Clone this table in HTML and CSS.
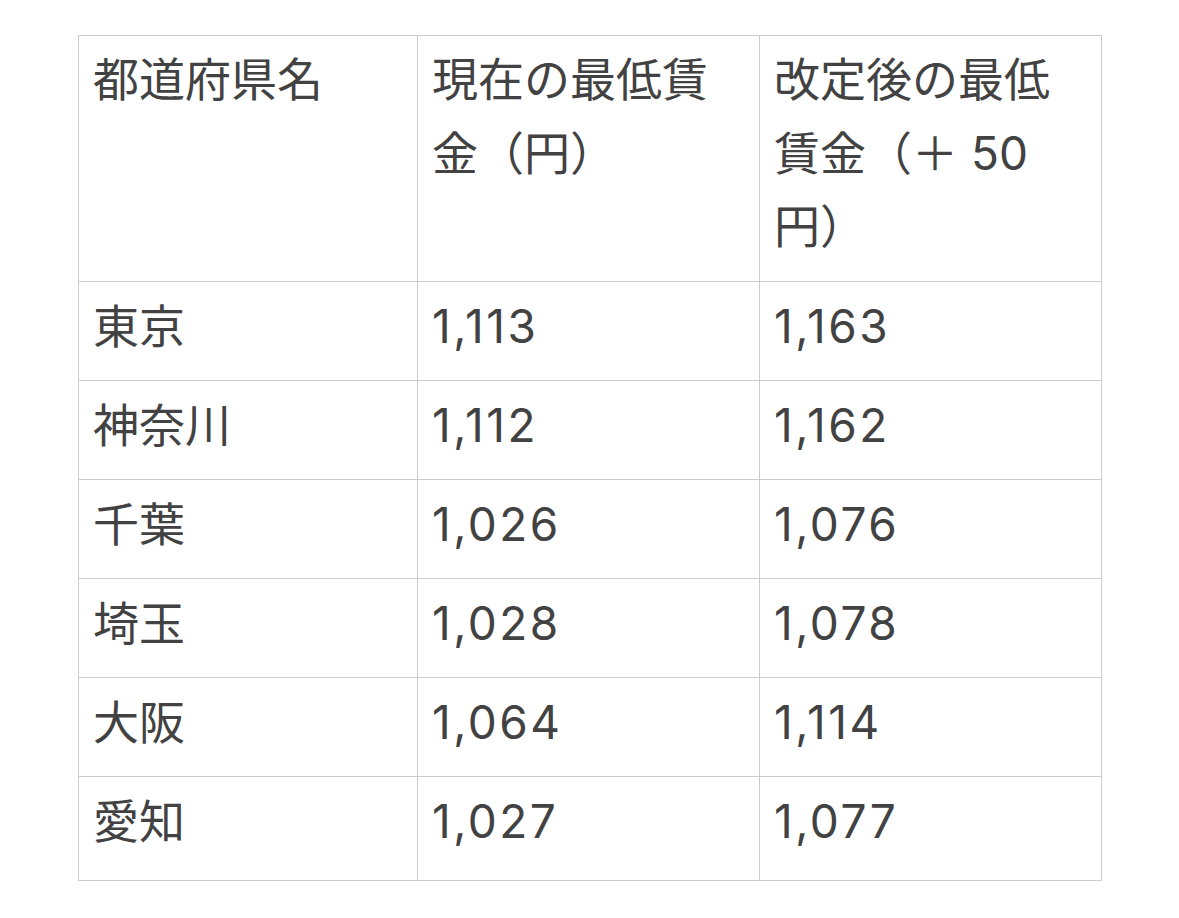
FILE: index.html
```html
<!DOCTYPE html>
<html lang="ja">
<head>
<meta charset="utf-8">
<title>最低賃金</title>
<link rel="stylesheet" href="styles.css">
</head>
<body>
<table class="wage-table">
  <colgroup>
    <col class="c1"><col class="c2"><col class="c3">
  </colgroup>
  <thead>
    <tr>
      <th>都道府県名</th>
      <th>現在の最低賃金（円）</th>
      <th>改定後の最低賃金（＋ 50円）</th>
    </tr>
  </thead>
  <tbody>
    <tr><td>東京</td><td class="num">1,113</td><td class="num">1,163</td></tr>
    <tr><td>神奈川</td><td class="num">1,112</td><td class="num">1,162</td></tr>
    <tr><td>千葉</td><td class="num">1,026</td><td class="num">1,076</td></tr>
    <tr><td>埼玉</td><td class="num">1,028</td><td class="num">1,078</td></tr>
    <tr><td>大阪</td><td class="num">1,064</td><td class="num">1,114</td></tr>
    <tr><td>愛知</td><td class="num">1,027</td><td class="num">1,077</td></tr>
  </tbody>
</table>
</body>
</html>
```

FILE: styles.css
```css
html, body {
  margin: 0;
  padding: 0;
  background: #ffffff;
}

body {
  font-family: Inter, "Noto Sans CJK JP", sans-serif;
  color: #424242;
}

.wage-table {
  margin: 35px 0 0 78px;
  width: 1023px;
  table-layout: fixed;
  border-collapse: collapse;
  font-size: 46px;
  line-height: 74px;
}

.wage-table .c1 { width: 339px; }
.wage-table .c2 { width: 342px; }
.wage-table .c3 { width: 342px; }

.wage-table th,
.wage-table td {
  border: 1px solid #cccccc;
  padding: 7px 16px 17px 14px;
  text-align: left;
  vertical-align: top;
  font-weight: 400;
  line-break: strict;
}

.wage-table th {
  line-height: 73.6px;
}

.wage-table td.num {
  letter-spacing: 2.5px;
}

.wage-table tbody tr:last-child td {
  padding-bottom: 22px;
}
```
